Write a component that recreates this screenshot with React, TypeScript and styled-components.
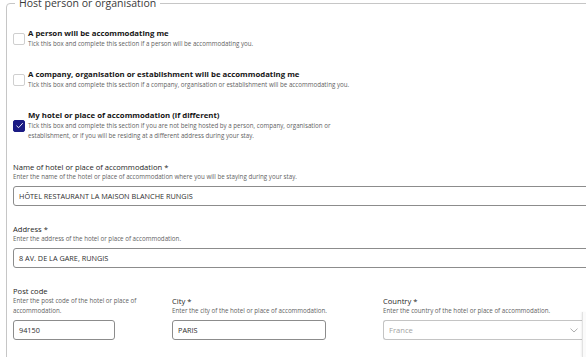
import * as React from 'react';
import styled, { createGlobalStyle } from 'styled-components';

const GlobalStyle = createGlobalStyle`
  html, body {
    margin: 0;
    padding: 0;
    background: #ffffff;
    overflow: hidden;
  }
  body {
    font-family: 'Open Sans', 'Noto Sans', 'Liberation Sans', sans-serif;
    color: #161616;
  }
`;

const Page = styled.div`
  position: relative;
  width: 586px;
  height: 357px;
  overflow: hidden;
`;

const Fieldset = styled.fieldset`
  margin: -4px -40px 0 6px;
  padding: 0 0 0 6px;
  border: 1px solid #c6c6c6;
  border-radius: 4px;
  min-width: 0;
  height: 420px;
  box-sizing: border-box;
`;

const Legend = styled.legend`
  margin-left: 2px;
  padding: 0 4px;
  font-size: 10.5px;
  line-height: 14px;
  color: #3a3a3a;
`;

const Options = styled.div`
  display: flex;
  flex-direction: column;
  gap: 20px;
  padding-top: 18px;
`;

const OptionRow = styled.label`
  display: flex;
  align-items: center;
  gap: 3px;
`;

const Box = styled.span<{ $checked?: boolean }>`
  flex-shrink: 0;
  width: 12px;
  height: 12px;
  box-sizing: border-box;
  border-radius: 2px;
  border: 1px solid ${(p) => (p.$checked ? '#1b1b84' : '#cfcfcf')};
  background: ${(p) => (p.$checked ? '#1b1b84' : '#ffffff')};
  display: flex;
  align-items: center;
  justify-content: center;
`;

const OptionText = styled.div`
  display: flex;
  flex-direction: column;
`;

const OptionTitle = styled.span`
  font-weight: 700;
  font-size: 7.8px;
  line-height: 11px;
  color: #161616;
`;

const Hint = styled.span<{ $width?: number }>`
  font-size: 6.2px;
  line-height: 10px;
  color: #626262;
  white-space: ${(p) => (p.$width ? 'normal' : 'nowrap')};
  max-width: ${(p) => (p.$width ? `${p.$width}px` : 'none')};
`;

const Fields = styled.div`
  display: flex;
  flex-direction: column;
  gap: 18px;
  margin-top: 21px;
`;

const Field = styled.div`
  display: flex;
  flex-direction: column;
`;

const Label = styled.span`
  font-size: 7.6px;
  line-height: 10px;
  color: #1e1e1e;
`;

const Input = styled.div<{ $width?: number }>`
  margin-top: 4px;
  height: 20px;
  box-sizing: border-box;
  width: ${(p) => (p.$width ? `${p.$width}px` : '100%')};
  border: 1px solid #8c8c8c;
  border-radius: 3px;
  padding: 0 5px;
  display: flex;
  align-items: center;
  font-size: 7.3px;
  color: #2e2e2e;
  text-transform: uppercase;
`;

const Select = styled.div`
  margin-top: 4px;
  height: 20px;
  box-sizing: border-box;
  width: 199px;
  border: 1px solid #c4c4c4;
  border-right: none;
  border-radius: 3px 0 0 3px;
  padding: 0 4px 0 5px;
  display: flex;
  align-items: center;
  justify-content: space-between;
  font-size: 7.6px;
  color: #a2a2a2;
`;

const BottomRow = styled.div`
  display: grid;
  grid-template-columns: 159px 211px 1fr;
  align-items: end;
`;

const EdgeBar = styled.div`
  position: absolute;
  right: 0;
  top: 312px;
  width: 3px;
  bottom: 0;
  border-left: 1px solid #e2e2e2;
  box-shadow: -1px 0 2px rgba(0, 0, 0, 0.06);
  background: #fafafa;
`;

const Check = () => (
  <svg width="9" height="9" viewBox="0 0 10 10">
    <path d="M1.6 5.2 L4 7.4 L8.6 2.4" fill="none" stroke="#ffffff" strokeWidth="1" />
  </svg>
);

const Chevron = () => (
  <svg width="8" height="5" viewBox="0 0 8 5">
    <path d="M0.5 0.6 L4 4 L7.5 0.6" fill="none" stroke="#9a9a9a" strokeWidth="0.8" />
  </svg>
);

const options = [
  {
    title: 'A person will be accommodating me',
    hint: 'Tick this box and complete this section if a person will be accommodating you.',
    checked: false,
    width: 0,
  },
  {
    title: 'A company, organisation or establishment will be accommodating me',
    hint: 'Tick this box and complete this section if a company, organisation or establishment will be accommodating you.',
    checked: false,
    width: 0,
  },
  {
    title: 'My hotel or place of accommodation (if different)',
    hint: 'Tick this box and complete this section if you are not being hosted by a person, company, organisation or establishment, or if you will be residing at a different address during your stay.',
    checked: true,
    width: 308,
  },
];

const App: React.FC = () => (
  <Page>
    <GlobalStyle />
    <Fieldset>
      <Legend>Host person or organisation</Legend>
      <Options>
        {options.map((o) => (
          <OptionRow key={o.title}>
            <Box $checked={o.checked}>{o.checked && <Check />}</Box>
            <OptionText>
              <OptionTitle>{o.title}</OptionTitle>
              <Hint $width={o.width || undefined}>{o.hint}</Hint>
            </OptionText>
          </OptionRow>
        ))}
      </Options>
      <Fields>
        <Field>
          <Label>Name of hotel or place of accommodation *</Label>
          <Hint>Enter the name of the hotel or place of accommodation where you will be staying during your stay.</Hint>
          <Input>Hôtel restaurant la maison blanche rungis</Input>
        </Field>
        <Field>
          <Label>Address *</Label>
          <Hint>Enter the address of the hotel or place of accommodation.</Hint>
          <Input>8 av. de la gare, rungis</Input>
        </Field>
        <BottomRow>
          <Field>
            <Label>Post code</Label>
            <Hint $width={142}>Enter the post code of the hotel or place of accommodation.</Hint>
            <Input $width={102}>94150</Input>
          </Field>
          <Field>
            <Label>City *</Label>
            <Hint>Enter the city of the hotel or place of accommodation.</Hint>
            <Input $width={154}>Paris</Input>
          </Field>
          <Field>
            <Label>Country *</Label>
            <Hint>Enter the country of the hotel or place of accommodation.</Hint>
            <Select>
              France
              <Chevron />
            </Select>
          </Field>
        </BottomRow>
      </Fields>
    </Fieldset>
    <EdgeBar />
  </Page>
);

export default App;
